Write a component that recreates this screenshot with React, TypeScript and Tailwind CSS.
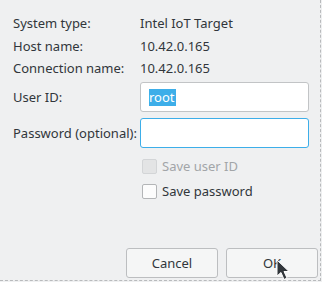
import React from "react";

export default function App() {
  return (
    <div
      className="relative w-[322px] h-[282px] bg-[#eff0f1] text-[#31363b] text-[13px] leading-[18px] overflow-hidden"
      style={{ fontFamily: '"Noto Sans", "Open Sans", sans-serif' }}
    >
      <div className="w-[321px] h-[281px] border-r border-b border-dashed border-[#b8babc] flex flex-col">
        <div className="pl-[13px] pt-[14px] flex flex-col">
          <div className="flex h-[18px]">
            <div className="w-[127px]">System type:</div>
            <div>Intel IoT Target</div>
          </div>
          <div className="flex h-[18px] mt-[5px]">
            <div className="w-[127px]">Host name:</div>
            <div>10.42.0.165</div>
          </div>
          <div className="flex h-[18px] mt-[4px]">
            <div className="w-[127px]">Connection name:</div>
            <div>10.42.0.165</div>
          </div>
          <div className="flex items-center h-[30px] mt-[5px]">
            <div className="w-[127px]">User ID:</div>
            <div className="w-[169px] h-[30px] bg-white border border-[#c2c4c6] rounded-[3px] flex items-center pl-[8px]">
              <span className="bg-[#3daee9] text-white leading-[17px] pr-[1px]">root</span>
            </div>
          </div>
          <div className="flex items-center h-[30px] mt-[6px]">
            <div className="w-[127px]">Password (optional):</div>
            <div className="w-[169px] h-[30px] bg-white border border-[#3daee9] rounded-[3px]" />
          </div>
          <div className="flex items-center h-[16px] mt-[10px] ml-[129px] text-[#a2a5a8]">
            <div className="w-[15px] h-[15px] rounded-[2px] border border-[#d3d5d7] bg-[#e3e4e5]" />
            <span className="ml-[5px]">Save user ID</span>
          </div>
          <div className="flex items-center h-[16px] mt-[9px] ml-[129px]">
            <div className="w-[15px] h-[15px] rounded-[2px] border border-[#b3b5b7] bg-[#fcfcfc]" />
            <span className="ml-[5px]">Save password</span>
          </div>
        </div>
        <div className="flex justify-end gap-[8px] mt-auto mb-[2px] pr-[2px]">
          <button className="w-[92px] h-[30px] rounded-[3px] border border-[#bcbec0] bg-[#f5f6f6] text-[#31363b]">
            Cancel
          </button>
          <button className="w-[92px] h-[30px] rounded-[3px] border border-[#bcbec0] bg-[#f5f6f6] text-[#31363b]">
            OK
          </button>
        </div>
      </div>
      <svg
        className="absolute left-[276px] top-[259px]"
        width="14"
        height="22"
        viewBox="0 0 14 22"
      >
        <path
          d="M1 1 L1 17 L5 13.5 L8 20.5 L11 19 L8 12.5 L13 12.5 Z"
          fill="#31363b"
          stroke="#ffffff"
          strokeWidth="1"
          strokeLinejoin="round"
        />
      </svg>
    </div>
  );
}
